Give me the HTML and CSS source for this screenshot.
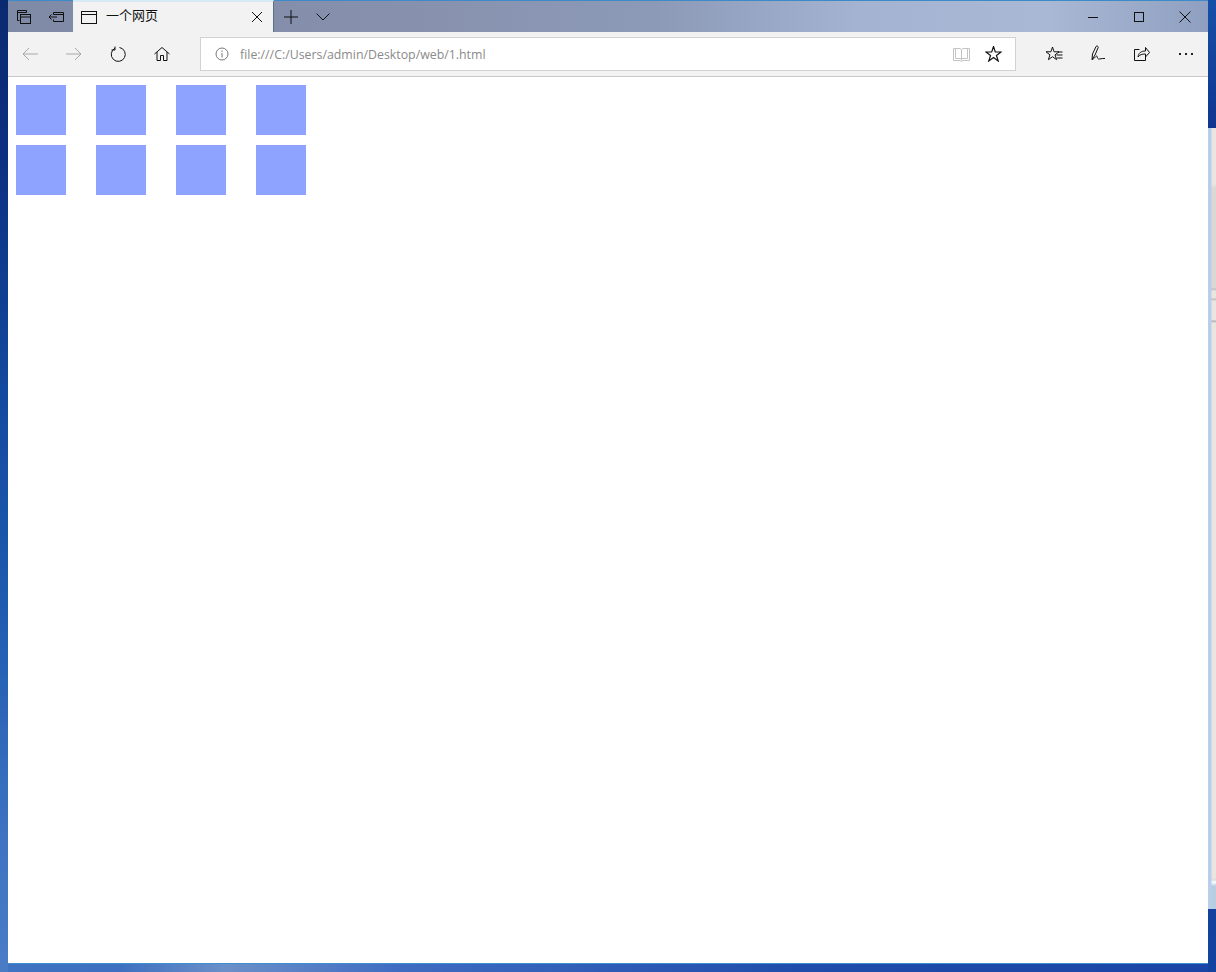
FILE: index.html
```html
<!DOCTYPE html>
<html>
<head>
    <title>一个网页</title>
    <link rel="stylesheet" href="styles.css">
</head>
<body>
    <div class="desktop">
        <div class="edge-left"></div>

        <div class="window">
            <!-- title bar -->
            <div class="titlebar">
                <div class="tab-tools">
                    <div class="bar-btn">
                        <svg width="16" height="16" viewBox="0 0 16 16" class="ink"><path d="M3.500 11.500h-2v-10h9v2M1.500 3.500h9"/><rect x="4.500" y="5.500" width="10" height="9"/><path d="M4.500 8h10"/></svg>
                    </div>
                    <div class="bar-btn">
                        <svg width="17" height="16" viewBox="0 0 17 16" class="ink"><path d="M5.500 5.500v-2h10v9h-10v-2M1 8h8M3.500 5.500 1 8l2.500 2.500M5.500 5.500h10"/></svg>
                    </div>
                </div>

                <div class="tab">
                    <svg width="16" height="13" viewBox="0 0 16 13" class="ink"><rect x=".5" y=".5" width="15" height="12"/><path d="M.5 3.500h15"/></svg>
                    <span class="tab-title">一个网页</span>
                    <svg width="12" height="12" viewBox="0 0 12 12" class="ink"><path d="M1 1l10 10M11 1 1 11"/></svg>
                </div>

                <div class="new-tab">
                    <svg width="14" height="14" viewBox="0 0 14 14" class="ink"><path d="M7 0v14M0 7h14"/></svg>
                </div>
                <div class="tab-list">
                    <svg width="14" height="8" viewBox="0 0 14 8" class="ink"><path d="M.5.500 7 7 13.500.5"/></svg>
                </div>

                <div class="win-controls">
                    <div class="win-btn">
                        <svg width="10" height="10" viewBox="0 0 10 10" class="ink"><path d="M0 5.500h10"/></svg>
                    </div>
                    <div class="win-btn">
                        <svg width="10" height="10" viewBox="0 0 10 10" class="ink"><rect x=".5" y=".5" width="9" height="9"/></svg>
                    </div>
                    <div class="win-btn">
                        <svg width="12" height="12" viewBox="0 0 12 12" class="ink"><path d="M.5.500l11 11M11.500.500l-11 11"/></svg>
                    </div>
                </div>
            </div>

            <!-- toolbar -->
            <div class="toolbar">
                <div class="nav-btn">
                    <svg width="16" height="14" viewBox="0 0 16 14" class="ink faint"><path d="M16 7H1M7 1 1 7l6 6"/></svg>
                </div>
                <div class="nav-btn">
                    <svg width="16" height="14" viewBox="0 0 16 14" class="ink faint"><path d="M0 7h15M9 1l6 6-6 6"/></svg>
                </div>
                <div class="nav-btn">
                    <svg width="16" height="16" viewBox="0.5 0 16 16" class="ink"><path d="M5.500 2.200A7 7 0 1 0 10 1.500M5.500.5v3.500H2"/></svg>
                </div>
                <div class="nav-btn">
                    <svg width="16" height="16" viewBox="0 0 16 16" class="ink"><path d="M.5 8 8 1.500 15.500 8M3 6v8.500h3.500V9.500h3v5H13V6"/></svg>
                </div>

                <div class="address">
                    <svg width="14" height="14" viewBox="0 0 14 14" class="ink grey"><circle cx="7" cy="7" r="6"/><path d="M7 6v4.500M7 3.500v1.500"/></svg>
                    <span class="url">file:///C:/Users/admin/Desktop/web/1.html</span>
                    <svg width="17" height="15" viewBox="0 0 17 15" class="ink pale"><path d="M.5 1.500h6.500l1.500 1 1.500-1h6.500v12h-6.500l-1.500 1-1.500-1H.5zM8.500 2.500v11M2.500 1.500v10h6M14.500 1.500v10h-6"/></svg>
                    <svg width="17" height="16" viewBox="0 0 17 16" class="ink star"><path d="M8.500.5l1.800 5.500h5.800l-4.650 3.460L13.200 15l-4.700-3.400L3.800 15l1.750-5.540L.9 6h5.800z"/></svg>
                </div>

                <div class="nav-btn first-hub">
                    <svg width="17" height="16" viewBox="0 0 17 16" class="ink"><path d="M6.500 1l1.590 4.820L13 5.800 9.070 8.830l1.530 4.830-4.100-2.960-4.100 2.960 1.530-4.830L0 5.800l4.910.02zM12 6h4.500M10.500 9h6M11 12h5.500"/></svg>
                </div>
                <div class="nav-btn">
                    <svg width="16" height="18" viewBox="0 0 16 18" class="ink"><path d="M2 14.500 2.500 9 6 1.500c.8-1 2.500-.3 2.200 1L5 10zM2 14.500c2-.5 3.500-3 4.500-3.500 1-.3.5 2.500 2 3 1.500.3 3-.8 6.500-.5"/></svg>
                </div>
                <div class="nav-btn">
                    <svg width="16" height="16" viewBox="0 0 16 16" class="ink"><path d="M5.500 3.500h-5v11h11v-4M4 11c.5-4 3-6 7.500-6V1.500l4 5-4 4.500V8C8 8 6 8.500 4 11z"/></svg>
                </div>
                <div class="nav-btn dots">
                    <i></i><i></i><i></i>
                </div>
            </div>

            <!-- page content -->
            <div class="page">
                <div class="box"></div>
                <div class="box"></div>
                <div class="box"></div>
                <div class="box"></div>
                <div class="box"></div>
                <div class="box"></div>
                <div class="box"></div>
                <div class="box"></div>
            </div>
        </div>

        <div class="edge-right">
            <div class="behind"></div>
        </div>
    </div>
</body>
</html>
```

FILE: styles.css
```css
* { box-sizing: border-box; }
html, body { margin: 0; padding: 0; height: 100%; overflow: hidden; }
body { font-family: "Open Sans", "Noto Sans", "Noto Sans CJK SC", sans-serif; }

.desktop {
    display: flex;
    height: 972px;
    padding-bottom: 8px;
    background: linear-gradient(90deg, #3f74c2 0, #3d70c0 120px, #6b90c9 225px, #3f6cc1 400px, #1f4dab 800px, #1a45a6 100%);
}
.edge-left {
    width: 8px;
    background: linear-gradient(180deg, #0a2a70 0, #0c2f80 150px, #134a9f 400px, #1e5ab0 600px, #3f74c2 850px, #4a7cc6 100%);
    margin-bottom: -8px;
}
.edge-right {
    width: 8px;
    display: flex;
    padding-top: 128px;
    padding-bottom: 63px;
    margin-bottom: -8px;
    background: linear-gradient(180deg, #1550a8 0, #10358f 128px, #14429f 100%);
}
.behind {
    flex: 1;
    background:
        linear-gradient(90deg, #b7cfe8 0, #b7cfe8 3px, transparent 4px),
        linear-gradient(180deg, #ece4de 0, #ece4de 56px, #dcd8d6 60px, #dcd8d6 160px, #b9bbc0 161px, #ece4de 163px, #ece4de 170px, #b9bbc0 171px, #ece4de 173px, #ece4de 192px, #a9adb5 193px, #ece4de 195px, #ece4de 750px, #d8dce4 752px, #ffffff 754px, #b9cde0 758px, #b9cde0 100%);
}

.window {
    flex: 1;
    display: flex;
    flex-direction: column;
    background: #fff;
    border-bottom: 1px solid #3f8fd0;
}

.ink { fill: none; stroke: #111; stroke-width: 1; flex: none; }
.faint { stroke: #a8a8a8; }
.grey { stroke: #777; }
.pale { stroke: #c4c4c4; }

/* title bar */
.titlebar {
    display: flex;
    height: 32px;
    border-top: 1px solid #3d8ac8;
    background: linear-gradient(90deg, #7f8aa6 0, #8791ad 400px, #8c9ab8 650px, #a4b3d2 850px, #a9b8d4 1040px, #8f9fc0 1200px);
}
.tab-tools { display: flex; width: 65px; }
.bar-btn { width: 32px; display: flex; align-items: center; justify-content: center; }
.tab {
    width: 201px;
    display: flex;
    align-items: center;
    margin-top: -1px;
    padding: 0 10px 0 8px;
    background: #f2f2f2;
    border-top: 2px solid #d8e9f6;
    border-right: 1px solid #5f6c8a;
}
.tab-title {
    flex: 1;
    margin-left: 9px;
    padding-bottom: 6px;
    font-size: 13px;
    color: #111;
}
.new-tab { width: 33px; display: flex; align-items: center; justify-content: center; }
.tab-list { width: 32px; display: flex; align-items: center; justify-content: center; }
.win-controls { display: flex; margin-left: auto; }
.win-btn { width: 46px; display: flex; align-items: center; justify-content: center; }

/* toolbar */
.toolbar {
    display: flex;
    height: 45px;
    padding-top: 5px;
    padding-bottom: 5px;
    background: #f2f2f2;
    border-bottom: 1px solid #c8c8c8;
}
.nav-btn { width: 44px; display: flex; align-items: center; justify-content: center; }
.first-hub { margin-left: 16px; }
.address {
    flex: 1;
    display: flex;
    align-items: center;
    margin-left: 16px;
    padding: 0 13px 0 14px;
    background: #fff;
    border: 1px solid #d2d2d2;
}
.url {
    flex: 1;
    margin-left: 11px;
    font-size: 12.35px;
    color: #8a8a8a;
}
.star { margin-left: 15px; stroke-width: 1.2; }
.dots { gap: 4px; }
.dots i { width: 2px; height: 2px; background: #222; }

/* page content */
.page {
    flex: 1;
    display: grid;
    grid-template-columns: repeat(4, 50px);
    grid-auto-rows: 50px;
    column-gap: 30px;
    row-gap: 10px;
    align-content: start;
    padding: 8px;
}
.box { background: #8ea2ff; }
```
